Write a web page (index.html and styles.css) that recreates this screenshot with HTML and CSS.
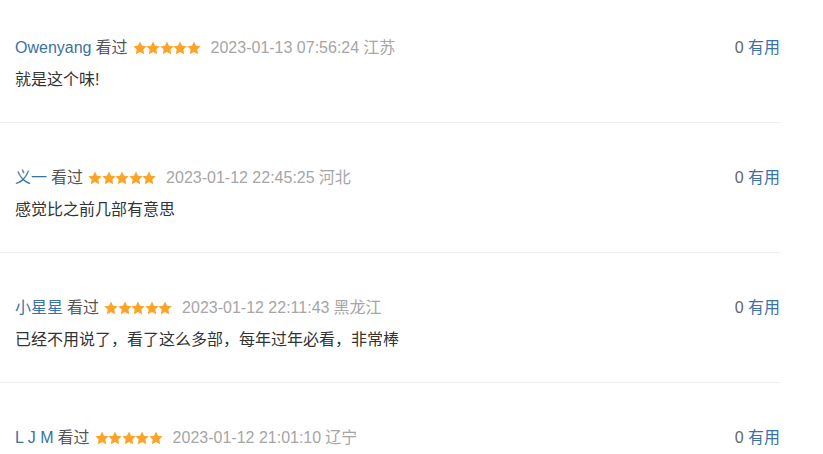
FILE: index.html
```html
<!DOCTYPE html>
<html lang="zh">
<head>
<meta charset="utf-8">
<link rel="stylesheet" href="styles.css">
</head>
<body>
<svg width="0" height="0" class="defs">
  <defs>
    <symbol id="star" viewBox="0 0 24 24">
      <path d="M12 .8l3.5 7.2 7.9 1.1-5.7 5.6 1.4 7.9L12 18.9l-7.1 3.7 1.4-7.9L.6 9.1l7.9-1.1z" fill="#fda428"/>
    </symbol>
  </defs>
</svg>
<div class="list">
  <div class="item">
    <div class="head">
      <div class="meta">
        <a class="name">Owenyang</a>
        <span class="seen">看过</span>
        <span class="stars"><svg><use href="#star"/></svg><svg><use href="#star"/></svg><svg><use href="#star"/></svg><svg><use href="#star"/></svg><svg><use href="#star"/></svg></span>
        <span class="time">2023-01-13 07:56:24</span>
        <span class="loc">江苏</span>
      </div>
      <div class="vote"><span class="num">0</span> <a class="useful">有用</a></div>
    </div>
    <p class="text">就是这个味!</p>
  </div>
  <div class="item">
    <div class="head">
      <div class="meta">
        <a class="name">义一</a>
        <span class="seen">看过</span>
        <span class="stars"><svg><use href="#star"/></svg><svg><use href="#star"/></svg><svg><use href="#star"/></svg><svg><use href="#star"/></svg><svg><use href="#star"/></svg></span>
        <span class="time">2023-01-12 22:45:25</span>
        <span class="loc">河北</span>
      </div>
      <div class="vote"><span class="num">0</span> <a class="useful">有用</a></div>
    </div>
    <p class="text">感觉比之前几部有意思</p>
  </div>
  <div class="item">
    <div class="head">
      <div class="meta">
        <a class="name">小星星</a>
        <span class="seen">看过</span>
        <span class="stars"><svg><use href="#star"/></svg><svg><use href="#star"/></svg><svg><use href="#star"/></svg><svg><use href="#star"/></svg><svg><use href="#star"/></svg></span>
        <span class="time">2023-01-12 22:11:43</span>
        <span class="loc">黑龙江</span>
      </div>
      <div class="vote"><span class="num">0</span> <a class="useful">有用</a></div>
    </div>
    <p class="text">已经不用说了，看了这么多部，每年过年必看，非常棒</p>
  </div>
  <div class="item last">
    <div class="head">
      <div class="meta">
        <a class="name">L J M</a>
        <span class="seen">看过</span>
        <span class="stars"><svg><use href="#star"/></svg><svg><use href="#star"/></svg><svg><use href="#star"/></svg><svg><use href="#star"/></svg><svg><use href="#star"/></svg></span>
        <span class="time">2023-01-12 21:01:10</span>
        <span class="loc">辽宁</span>
      </div>
      <div class="vote"><span class="num">0</span> <a class="useful">有用</a></div>
    </div>
  </div>
</div>
</body>
</html>
```
FILE: styles.css
```css
html, body {
  margin: 0;
  padding: 0;
  background: #fff;
}
body {
  font-family: "Liberation Sans", Arial, "Noto Sans CJK SC", sans-serif;
  font-size: 16px;
  color: #333;
  overflow: hidden;
}
.defs {
  position: absolute;
  width: 0;
  height: 0;
}
.list {
  width: 780px;
}
.item {
  padding: 45px 0 32px 15px;
  border-bottom: 1px solid #eeeeee;
}
.item:first-child {
  padding-top: 38px;
}
.item.last {
  border-bottom: none;
}
.head {
  display: flex;
  justify-content: space-between;
  align-items: center;
  height: 20px;
  line-height: 20px;
}
.meta {
  display: flex;
  align-items: center;
  gap: 4px;
  white-space: nowrap;
}
.name {
  color: #3a72a3;
}
.seen {
  color: #555;
}
.stars {
  display: flex;
  margin: 0 6px 0 1px;
}
.stars svg {
  width: 14px;
  height: 14px;
  margin-right: -0.4px;
}
.time {
  color: #a6a6a6;
}
.loc {
  color: #a6a6a6;
}
.vote {
  color: #666;
  white-space: nowrap;
}
.useful {
  color: #3a72a3;
}
.text {
  margin: 12px 0 0;
  line-height: 20px;
  color: #333;
}
```
